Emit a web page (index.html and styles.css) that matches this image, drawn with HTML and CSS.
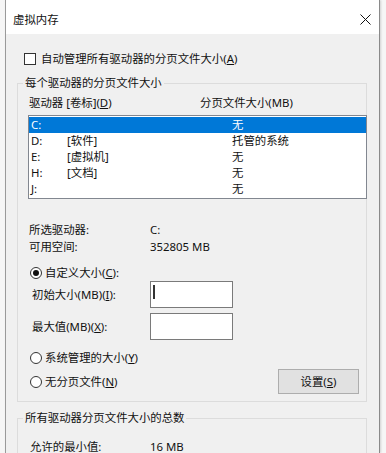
FILE: index.html
```html
<!DOCTYPE html>
<html>
	<head>
		<meta charset="utf-8">
		<title>虚拟内存</title>
		<link rel="stylesheet" href="styles.css">
	</head>
	<body>

	<div class="window">
		<div class="titlebar">
			<span class="title">虚拟内存</span>
			<svg class="close" width="11" height="11" viewBox="0 0 11 11"><path d="M0.5 0.5 L10.5 10.5 M10.5 0.5 L0.5 10.5" stroke="#111" stroke-width="1" fill="none"/></svg>
		</div>

		<div class="content">
			<div class="check-row"><span class="checkbox"></span>自动管理所有驱动器的分页文件大小(<u>A</u>)</div>

			<fieldset class="group group-drives">
				<legend>每个驱动器的分页文件大小</legend>
				<div class="group-inner">
					<div class="list-head"><span class="col-drive">驱动器 [卷标](<u>D</u>)</span><span>分页文件大小(MB)</span></div>
					<ul class="drive-list">
						<li class="selected"><span class="letter">C:</span><span class="vol"></span><span>无</span></li>
						<li><span class="letter">D:</span><span class="vol">[软件]</span><span>托管的系统</span></li>
						<li><span class="letter">E:</span><span class="vol">[虚拟机]</span><span>无</span></li>
						<li><span class="letter">H:</span><span class="vol">[文档]</span><span>无</span></li>
						<li><span class="letter">J:</span><span class="vol"></span><span>无</span></li>
					</ul>

					<div class="info">
						<span class="info-label">所选驱动器:</span><span>C:</span>
						<span class="info-label">可用空间:</span><span>352805 MB</span>
					</div>

					<div class="radio-row"><span class="radio checked"></span>自定义大小(<u>C</u>):</div>
					<div class="field-row">
						<span class="field-label">初始大小(MB)(<u>I</u>):</span>
						<span class="textbox"><span class="caret"></span></span>
					</div>
					<div class="field-row">
						<span class="field-label">最大值(MB)(<u>X</u>):</span>
						<span class="textbox"></span>
					</div>
					<div class="radio-row"><span class="radio"></span>系统管理的大小(<u>Y</u>)</div>
					<div class="last-row">
						<div class="radio-line"><span class="radio"></span>无分页文件(<u>N</u>)</div>
						<button class="btn">设置(<u>S</u>)</button>
					</div>
				</div>
			</fieldset>

			<fieldset class="group group-total">
				<legend>所有驱动器分页文件大小的总数</legend>
				<div class="group-inner">
					<div class="info">
						<span class="info-label">允许的最小值:</span><span>16 MB</span>
					</div>
				</div>
			</fieldset>
		</div>
	</div>

	</body>
</html>
```

FILE: styles.css
```css
body {
	background-color: #f6f6f6;
	color: #111;
	font: normal 11.4px "Noto Sans", "Noto Sans CJK SC", sans-serif;
	line-height: 16px;
	margin: 0;
	overflow: hidden;
}
u { text-decoration: underline; text-underline-offset: 1px; }

.window {
	background-color: #f0f0f0;
	border-left: 1px solid #9a9a9a;
	border-right: 1px solid #8a8a8a;
	box-shadow: 1px 0 2px rgba(0, 0, 0, 0.15);
	height: 453px;
	margin-left: 5px;
	width: 373px;
}
.titlebar {
	background-color: #fff;
	display: flex;
	height: 34px;
	justify-content: space-between;
	padding: 12px 8px 0 7px;
	box-sizing: border-box;
}
.title { line-height: 16px; }
.close { margin-top: 2px; }

.content { padding-top: 17px; }

.check-row {
	align-items: center;
	display: flex;
	margin-left: 18px;
}
.checkbox {
	background-color: #fff;
	border: 1px solid #333;
	display: inline-block;
	height: 10px;
	margin-right: 5px;
	width: 10px;
}

.group {
	border: 1px solid #dcdcdc;
	margin: 8px 12px 0 11px;
	padding: 0 0 7px 0;
}
.group legend {
	line-height: 16px;
	margin-left: 5px;
	padding: 0 2px;
}
.group-drives .group-inner { padding: 4px 0 0 10px; }
.group-total .group-inner { padding: 13px 0 4px 12px; }

.list-head { display: flex; padding-left: 1px; }
.col-drive { width: 171px; }

.drive-list {
	background-color: #fff;
	border: 1px solid #828790;
	height: 81px;
	list-style: none;
	margin: 4px -1px 0 0;
	padding: 1px 0 0 0;
	box-sizing: content-box;
}
.drive-list li {
	display: flex;
	height: 16px;
	padding-left: 2px;
}
.drive-list li.selected { background-color: #0078d7; color: #fff; }
.letter { width: 36px; }
.vol { width: 165px; }

.info {
	display: grid;
	grid-template-columns: 122px auto;
	line-height: 17px;
	margin-top: 22px;
}
.group-total .info { margin-top: 0; grid-template-columns: 120px auto; line-height: 16px; }
.info-label { padding-left: 1px; }
.group-total .info-label { padding-left: 0; }

.radio-row, .radio-line {
	align-items: center;
	display: flex;
	height: 16px;
	padding-left: 2px;
}
.radio-row { margin-top: 10px; }
.radio {
	background-color: #fff;
	border: 1px solid #333;
	border-radius: 50%;
	display: inline-flex;
	align-items: center;
	justify-content: center;
	height: 10px;
	margin-right: 3px;
	width: 10px;
}
.radio.checked::after {
	background-color: #111;
	border-radius: 50%;
	content: "";
	height: 6px;
	width: 6px;
}

.field-row {
	align-items: center;
	display: flex;
	margin-bottom: 5px;
}
.field-row + .field-row { margin-bottom: 0; }
.field-label { padding-left: 4px; width: 118px; }
.textbox {
	background-color: #fff;
	border: 1px solid #7a7a7a;
	display: block;
	height: 25px;
	position: relative;
	width: 81px;
}
.caret {
	background-color: #333;
	height: 14px;
	left: 2px;
	position: absolute;
	top: 3px;
	width: 2px;
}

.last-row {
	align-items: center;
	display: flex;
	justify-content: space-between;
	margin-top: 3px;
}
.btn {
	background-color: #e1e1e1;
	border: 1px solid #adadad;
	color: #111;
	font: inherit;
	height: 25px;
	margin-right: 7px;
	padding: 0;
	width: 81px;
}
```
